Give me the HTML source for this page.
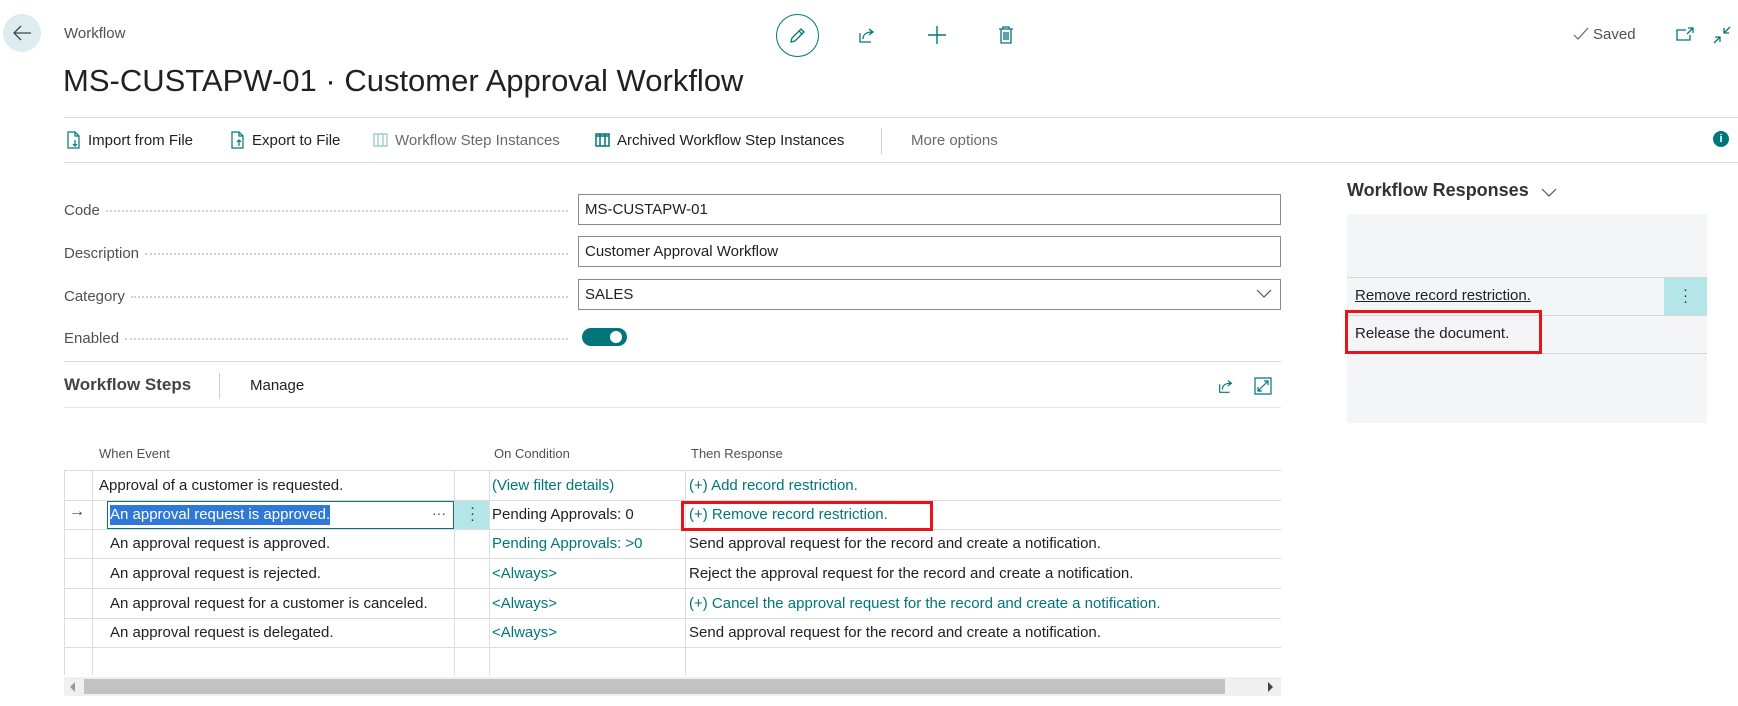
<!DOCTYPE html>
<html><head><meta charset="utf-8"><style>
*{margin:0;padding:0;box-sizing:border-box}
body{width:1738px;height:706px;background:#fff;font-family:"Liberation Sans",sans-serif;color:#212121;position:relative;overflow:hidden}
.a{position:absolute;white-space:nowrap}
.teal{color:#00767a}
.line{position:absolute;height:1px;background:#d9d9d9}
.lbl{position:absolute;left:64px;width:504px;font-size:15px;color:#505050;display:flex;align-items:center}
.lbl span{padding-right:6px}
.lbl i{flex:1;border-bottom:2px dotted #d0d0d0;height:0;margin-top:2px}
.inp{position:absolute;left:578px;width:703px;height:31px;border:1px solid #8a8a8a;font-size:15px;padding:6px 6px;color:#212121}
.vl{position:absolute;width:1px;background:#dcdcdc;top:470px;height:205px}
.hl{position:absolute;left:64px;width:1217px;height:1px;background:#dcdcdc}
.cell{position:absolute;font-size:15px;height:29px;line-height:29px}
</style></head><body>
<div class="a" style="left:3px;top:14px;width:38px;height:38px;border-radius:50%;background:#dcecef"></div>
<svg class="a" style="left:11px;top:23px" width="22" height="20" viewBox="0 0 22 20"><path d="M20 10H3M10 3L3 10l7 7" fill="none" stroke="#444" stroke-width="1.3"/></svg>
<div class="a" style="left:64px;top:25px;font-size:15px;color:#505050">Workflow</div>
<div class="a" style="left:63px;top:63px;font-size:31px;color:#212121;font-weight:300">MS-CUSTAPW-01 · Customer Approval Workflow</div>

<div class="a" style="left:776px;top:14px;width:43px;height:43px;border:1.3px solid #00767a;border-radius:50%"></div>
<svg class="a" style="left:787px;top:25px" width="21" height="21" viewBox="0 0 21 21"><path d="M4 17l1-4L14 4l3 3-9 9zM12 6l3 3" fill="none" stroke="#00767a" stroke-width="1.3"/></svg>
<svg class="a" style="left:857px;top:25px" width="20" height="20" viewBox="0 0 20 20"><path d="M3 8v9h11M6 14c0-5 4-7 9-7M12 4l4 3-4 3" fill="none" stroke="#00767a" stroke-width="1.3"/></svg>
<svg class="a" style="left:927px;top:25px" width="20" height="20" viewBox="0 0 20 20"><path d="M10 1v18M1 10h18" stroke="#00767a" stroke-width="1.4"/></svg>
<svg class="a" style="left:997px;top:25px" width="18" height="20" viewBox="0 0 18 20"><path d="M2 4h14M6 4V2h6v2M4 4v14h10V4M7 7v8M9 7v8M11 7v8" fill="none" stroke="#00767a" stroke-width="1.3"/></svg>

<svg class="a" style="left:1573px;top:27px" width="16" height="14" viewBox="0 0 16 14"><path d="M1 8l4 4L15 1" fill="none" stroke="#666" stroke-width="1.2"/></svg>
<div class="a" style="left:1593px;top:26px;font-size:15px;color:#505050">Saved</div>
<svg class="a" style="left:1676px;top:27px" width="18" height="16" viewBox="0 0 18 16"><path d="M10 3H1v10h13V8M12 1h5v5M17 1l-6 6" fill="none" stroke="#00767a" stroke-width="1.3"/></svg>
<svg class="a" style="left:1713px;top:26px" width="18" height="18" viewBox="0 0 18 18"><path d="M17 1l-6 6M11 2v5h5M1 17l6-6M2 11h5v5" fill="none" stroke="#00767a" stroke-width="1.3"/></svg>

<div class="line" style="left:64px;top:117px;width:1674px"></div>
<svg class="a" style="left:66px;top:131px" width="16" height="19" viewBox="0 0 16 19"><path d="M2 1h7l4 4v12H2zM9 1v4h4M9 9v6M7 13l2 2 2-2" fill="none" stroke="#00767a" stroke-width="1.2"/></svg>
<div class="a" style="left:88px;top:132px;font-size:15px">Import from File</div>
<svg class="a" style="left:230px;top:131px" width="16" height="19" viewBox="0 0 16 19"><path d="M2 1h7l4 4v12H2zM9 1v4h4M9 15V9M7 11l2-2 2 2" fill="none" stroke="#00767a" stroke-width="1.2"/></svg>
<div class="a" style="left:252px;top:132px;font-size:15px">Export to File</div>
<svg class="a" style="left:373px;top:133px" width="15" height="14" viewBox="0 0 15 14"><path d="M1 1h13v12H1zM5 1v12M10 1v12" fill="none" stroke="#9ccfd1" stroke-width="1.4"/></svg>
<div class="a" style="left:395px;top:132px;font-size:15px;color:#6a6a6a">Workflow Step Instances</div>
<svg class="a" style="left:595px;top:133px" width="15" height="14" viewBox="0 0 15 14"><path d="M1 1h13v12H1zM5 1v12M10 1v12M1 3h13" fill="none" stroke="#00767a" stroke-width="1.5"/></svg>
<div class="a" style="left:617px;top:132px;font-size:15px">Archived Workflow Step Instances</div>
<div class="a" style="left:881px;top:128px;width:1px;height:26px;background:#ccc"></div>
<div class="a" style="left:911px;top:132px;font-size:15px;color:#6a6a6a">More options</div>
<div class="a" style="left:1713px;top:131px;width:16px;height:16px;border-radius:50%;background:#00767a;color:#fff;font-size:11px;font-weight:bold;text-align:center;line-height:16px">i</div>
<div class="line" style="left:64px;top:162px;width:1674px"></div>

<div class="lbl" style="top:200px;height:20px"><span>Code</span><i></i></div>
<div class="lbl" style="top:243px;height:20px"><span>Description</span><i></i></div>
<div class="lbl" style="top:286px;height:20px"><span>Category</span><i></i></div>
<div class="lbl" style="top:328px;height:20px"><span>Enabled</span><i></i></div>
<div class="inp" style="top:194px">MS-CUSTAPW-01</div>
<div class="inp" style="top:236px">Customer Approval Workflow</div>
<div class="inp" style="top:279px">SALES</div>
<svg class="a" style="left:1256px;top:289px" width="16" height="10" viewBox="0 0 16 10"><path d="M1 1l7 7 7-7" fill="none" stroke="#555" stroke-width="1.2"/></svg>
<div class="a" style="left:582px;top:328px;width:45px;height:18px;border-radius:9px;background:#00767a"></div>
<div class="a" style="left:610px;top:331px;width:12px;height:12px;border-radius:50%;background:#fff"></div>

<div class="line" style="left:64px;top:361px;width:1217px"></div>
<div class="a" style="left:64px;top:375px;font-size:17px;font-weight:bold;color:#444">Workflow Steps</div>
<div class="a" style="left:219px;top:373px;width:1px;height:26px;background:#ccc"></div>
<div class="a" style="left:250px;top:377px;font-size:15px">Manage</div>
<svg class="a" style="left:1217px;top:377px" width="18" height="18" viewBox="0 0 20 20"><path d="M3 8v9h11M6 14c0-5 4-7 9-7M12 4l4 3-4 3" fill="none" stroke="#00767a" stroke-width="1.3"/></svg>
<svg class="a" style="left:1254px;top:377px" width="18" height="18" viewBox="0 0 18 18"><path d="M1 1h16v16H1zM10 4h4v4M14 4l-5 5M4 10v4h4M4 14l5-5" fill="none" stroke="#00767a" stroke-width="1.2"/></svg>
<div class="line" style="left:64px;top:407px;width:1217px;background:#e6e6e6"></div>

<div class="a" style="left:99px;top:446px;font-size:13px;color:#505050">When Event</div>
<div class="a" style="left:494px;top:446px;font-size:13px;color:#505050">On Condition</div>
<div class="a" style="left:691px;top:446px;font-size:13px;color:#505050">Then Response</div>

<div class="hl" style="top:470px"></div><div class="hl" style="top:500px"></div><div class="hl" style="top:529px"></div><div class="hl" style="top:558px"></div><div class="hl" style="top:588px"></div><div class="hl" style="top:618px"></div><div class="hl" style="top:647px"></div>
<div class="vl" style="left:64px"></div><div class="vl" style="left:92px"></div><div class="vl" style="left:454px"></div><div class="vl" style="left:489px"></div><div class="vl" style="left:685px"></div>

<div class="cell" style="left:99px;top:471px">Approval of a customer is requested.</div>
<div class="cell teal" style="left:492px;top:471px">(View filter details)</div>
<div class="cell teal" style="left:689px;top:471px">(+) Add record restriction.</div>

<div class="a" style="left:69px;top:503px;font-size:16px;color:#444">→</div>
<div class="a" style="left:107px;top:501px;width:347px;height:28px;border:1px solid #00767a"></div>
<div class="cell" style="left:110px;top:500px"><span style="background:#3078d8;color:#fff;line-height:20px;display:inline-block">An approval request is approved.</span></div>
<div class="a" style="left:432px;top:505px;font-size:14px;color:#444">···</div>
<div class="a" style="left:455px;top:501px;width:34px;height:28px;background:#b3e5e9"></div>
<div class="a" style="left:470px;top:505px;font-size:15px;line-height:6px;color:#333">·<br>·<br>·</div>
<div class="cell" style="left:492px;top:500px">Pending Approvals: 0</div>
<div class="cell teal" style="left:689px;top:500px">(+) Remove record restriction.</div>
<div class="a" style="left:681px;top:501px;width:252px;height:30px;border:3px solid #e8141a"></div>

<div class="cell" style="left:110px;top:529px">An approval request is approved.</div>
<div class="cell teal" style="left:492px;top:529px">Pending Approvals: &gt;0</div>
<div class="cell" style="left:689px;top:529px">Send approval request for the record and create a notification.</div>
<div class="cell" style="left:110px;top:559px">An approval request is rejected.</div>
<div class="cell teal" style="left:492px;top:559px">&lt;Always&gt;</div>
<div class="cell" style="left:689px;top:559px">Reject the approval request for the record and create a notification.</div>
<div class="cell" style="left:110px;top:589px">An approval request for a customer is canceled.</div>
<div class="cell teal" style="left:492px;top:589px">&lt;Always&gt;</div>
<div class="cell teal" style="left:689px;top:589px">(+) Cancel the approval request for the record and create a notification.</div>
<div class="cell" style="left:110px;top:618px">An approval request is delegated.</div>
<div class="cell teal" style="left:492px;top:618px">&lt;Always&gt;</div>
<div class="cell" style="left:689px;top:618px">Send approval request for the record and create a notification.</div>

<div class="a" style="left:64px;top:677px;width:1217px;height:19px;background:#f0f0f0"></div>
<div class="a" style="left:84px;top:679px;width:1141px;height:15px;background:#c2c2c2"></div>
<div class="a" style="left:70px;top:682px;width:0;height:0;border-top:5px solid transparent;border-bottom:5px solid transparent;border-right:5px solid #999"></div>
<div class="a" style="left:1268px;top:682px;width:0;height:0;border-top:5px solid transparent;border-bottom:5px solid transparent;border-left:5px solid #444"></div>

<div class="a" style="left:1347px;top:180px;font-size:18px;font-weight:bold;color:#333">Workflow Responses</div>
<svg class="a" style="left:1541px;top:188px" width="16" height="10" viewBox="0 0 16 10"><path d="M1 1l7 7 7-7" fill="none" stroke="#555" stroke-width="1.2"/></svg>
<div class="a" style="left:1347px;top:214px;width:360px;height:209px;background:#f4f5f6"></div>
<div class="a" style="left:1347px;top:277px;width:360px;height:1px;background:#d6d6d6"></div>
<div class="a" style="left:1347px;top:315px;width:360px;height:1px;background:#d6d6d6"></div>
<div class="a" style="left:1347px;top:353px;width:360px;height:1px;background:#d6d6d6"></div>
<div class="a" style="left:1664px;top:278px;width:43px;height:37px;background:#b3e5e9"></div>
<div class="a" style="left:1683px;top:287px;font-size:15px;line-height:6px;color:#333">·<br>·<br>·</div>
<div class="a" style="left:1355px;top:287px;font-size:15px;text-decoration:underline">Remove record restriction.</div>
<div class="a" style="left:1355px;top:325px;font-size:15px">Release the document.</div>
<div class="a" style="left:1345px;top:310px;width:197px;height:44px;border:3px solid #e8141a"></div>
</body></html>
